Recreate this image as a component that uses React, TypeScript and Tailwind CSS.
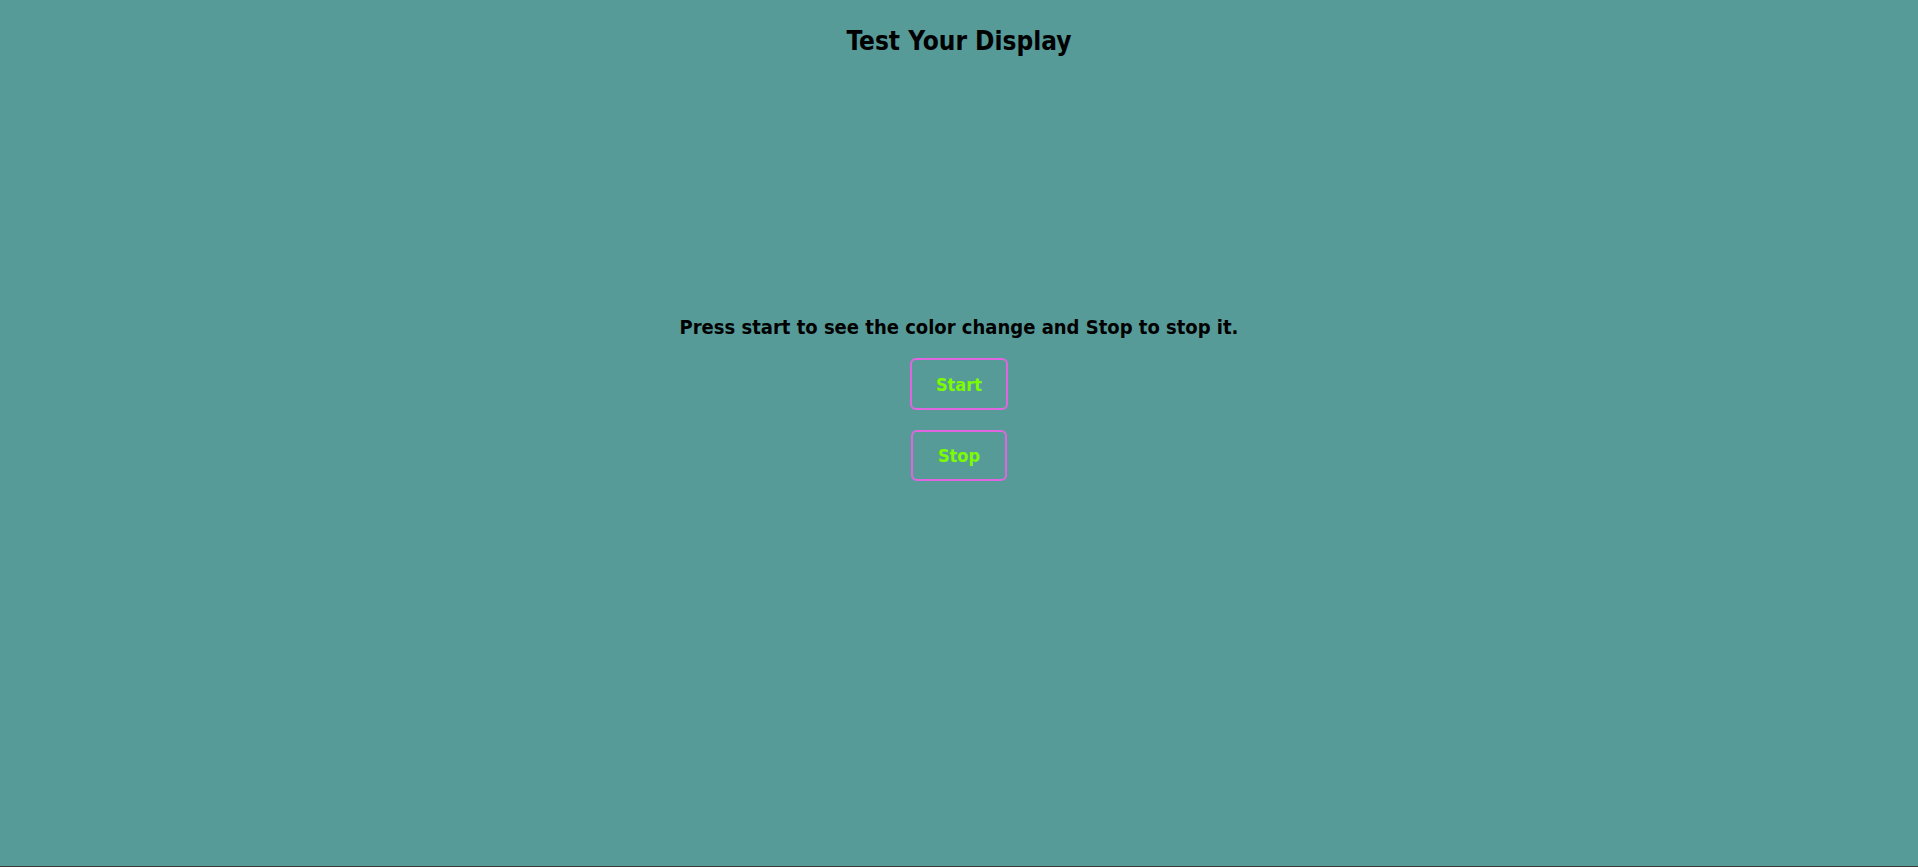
export default function App() {
  return (
    <div
      className="w-full h-[867px] bg-[#579b99] border-b border-[#3c3c3c] flex flex-col items-center text-black"
      style={{ fontFamily: '"DejaVu Sans Condensed", "Liberation Sans", Arial, sans-serif' }}
    >
      <h1 className="mt-[25px] text-[26px] leading-[32px] font-bold">Test Your Display</h1>
      <p className="mt-[257px] text-[20px] leading-[26px] font-bold">
        Press start to see the color change and Stop to stop it.
      </p>
      <button className="mt-[18px] w-[98px] h-[52px] border-2 border-[#e066e0] rounded-[6px] text-[#7cfc00] text-[18px] font-bold">
        Start
      </button>
      <button className="mt-[20px] w-[96px] h-[51px] border-2 border-[#e066e0] rounded-[6px] text-[#7cfc00] text-[18px] font-bold">
        Stop
      </button>
    </div>
  );
}
